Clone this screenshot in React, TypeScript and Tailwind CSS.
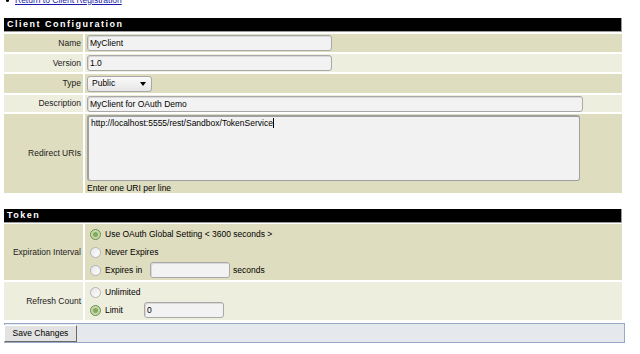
import React from "react";

const tan = "bg-[#dfddbf]";
const light = "bg-[#eeeedf]";

function Header({ title }: { title: string }) {
  return (
    <div className="h-[14px] bg-black border-b border-r border-[#9a9a9a] pl-[3px] text-white font-bold text-[9px] leading-[13px] tracking-[1.5px]">
      {title}
    </div>
  );
}

function Row({
  label,
  bg,
  h,
  children,
}: {
  label: string;
  bg: string;
  h: string;
  children: React.ReactNode;
}) {
  return (
    <div className={`grid grid-cols-[79px_1fr] gap-x-[2px] ${h}`}>
      <div className={`${bg} flex items-center justify-end pr-[2px] text-[#222]`}>{label}</div>
      <div className={`${bg} pl-[2px] flex flex-col justify-center`}>{children}</div>
    </div>
  );
}

function TextBox({ value, w }: { value: string; w: string }) {
  return (
    <input
      readOnly
      defaultValue={value}
      className={`${w} h-[16px] rounded-[3px] border border-[#a8a8a8] bg-[#f2f2f2] px-[2px] text-[8.5px] text-black outline-none shadow-[inset_1px_1px_0_#d8d8d8]`}
    />
  );
}

function Radio({ checked }: { checked?: boolean }) {
  return checked ? (
    <span className="w-[11px] h-[11px] rounded-full border border-[#6f9150] bg-[#c3d9a6] flex items-center justify-center shrink-0">
      <span className="w-[5px] h-[5px] rounded-full bg-[#86a864]" />
    </span>
  ) : (
    <span className="w-[11px] h-[11px] rounded-full border border-[#b4b4b4] bg-gradient-to-br from-[#e6e6e6] to-white shrink-0" />
  );
}

export default function App() {
  return (
    <div className="w-[640px] h-[354px] overflow-hidden bg-white pl-[4px] text-[8.5px] text-black [font-family:'Liberation_Sans',Arial,sans-serif]">
      <div className="-mt-[5px] h-[23px] flex items-start gap-[6px] pl-[2px]">
        <span className="mt-[4px] w-[3px] h-[3px] rounded-full bg-black" />
        <a className="text-[#1a1aaa] underline leading-[11px]" href="#">
          Return to Client Registration
        </a>
      </div>

      <div className="w-[618px] flex flex-col gap-[2px]">
        <Header title="Client Configuration" />
        <Row label="Name" bg={tan} h="h-[18px]">
          <TextBox value="MyClient" w="w-[245px]" />
        </Row>
        <Row label="Version" bg={light} h="h-[18px]">
          <TextBox value="1.0" w="w-[245px]" />
        </Row>
        <Row label="Type" bg={tan} h="h-[19px]">
          <div className="w-[65px] h-[16px] rounded-[3px] border border-[#a8a8a8] bg-gradient-to-b from-[#fafafa] to-[#e6e6e6] flex items-center justify-between pl-[4px] pr-[5px]">
            <span>Public</span>
            <span className="w-0 h-0 border-l-[3.5px] border-r-[3.5px] border-t-[4px] border-l-transparent border-r-transparent border-t-black" />
          </div>
        </Row>
        <Row label="Description" bg={light} h="h-[17px]">
          <TextBox value="MyClient for OAuth Demo" w="w-[496px]" />
        </Row>
        <Row label="Redirect URIs" bg={tan} h="h-[79px]">
          <div className="w-[493px] h-[66px] mt-[1px] rounded-[3px] border border-[#a0a0a0] border-l-[2px] border-t-[2px] bg-[#f2f2f2] px-[2px] pt-[1px] leading-[11px]">
            http://localhost:5555/rest/Sandbox/TokenService
            <span className="inline-block w-px h-[10px] bg-black align-[-2px]" />
          </div>
          <div className="mt-[2px] leading-[10px]">Enter one URI per line</div>
        </Row>
      </div>

      <div className="w-[618px] flex flex-col gap-[1px] mt-[16px]">
        <Header title="Token" />
        <div className="flex flex-col gap-[2px]">
          <Row label="Expiration Interval" bg={tan} h="h-[56px]">
            <div className="flex flex-col pl-[3px]">
              <div className="h-[18px] flex items-center gap-[4px]">
                <Radio checked />
                <span>Use OAuth Global Setting &lt; 3600 seconds &gt;</span>
              </div>
              <div className="h-[18px] flex items-center gap-[4px]">
                <Radio />
                <span>Never Expires</span>
              </div>
              <div className="h-[18px] flex items-center gap-[4px]">
                <Radio />
                <span className="w-[41px]">Expires in</span>
                <TextBox value="" w="w-[80px]" />
                <span className="ml-[-1px]">seconds</span>
              </div>
            </div>
          </Row>
          <Row label="Refresh Count" bg={light} h="h-[38px]">
            <div className="flex flex-col pl-[3px]">
              <div className="h-[18px] flex items-center gap-[4px]">
                <Radio />
                <span>Unlimited</span>
              </div>
              <div className="h-[18px] flex items-center gap-[4px]">
                <Radio checked />
                <span className="w-[35px]">Limit</span>
                <TextBox value="0" w="w-[80px]" />
              </div>
            </div>
          </Row>
        </div>
      </div>

      <div className="w-[621px] h-[20px] mt-[3px] border border-[#97a9c9] bg-[#e5e8ed] flex items-center">
        <button className="h-[17px] w-[73px] -ml-px bg-[#e2e2e2] border border-t-white border-l-white border-b-[#6a6a6a] border-r-[#6a6a6a] text-[8.5px] text-black [font-family:'Liberation_Sans',Arial,sans-serif]">
          Save Changes
        </button>
      </div>
    </div>
  );
}
